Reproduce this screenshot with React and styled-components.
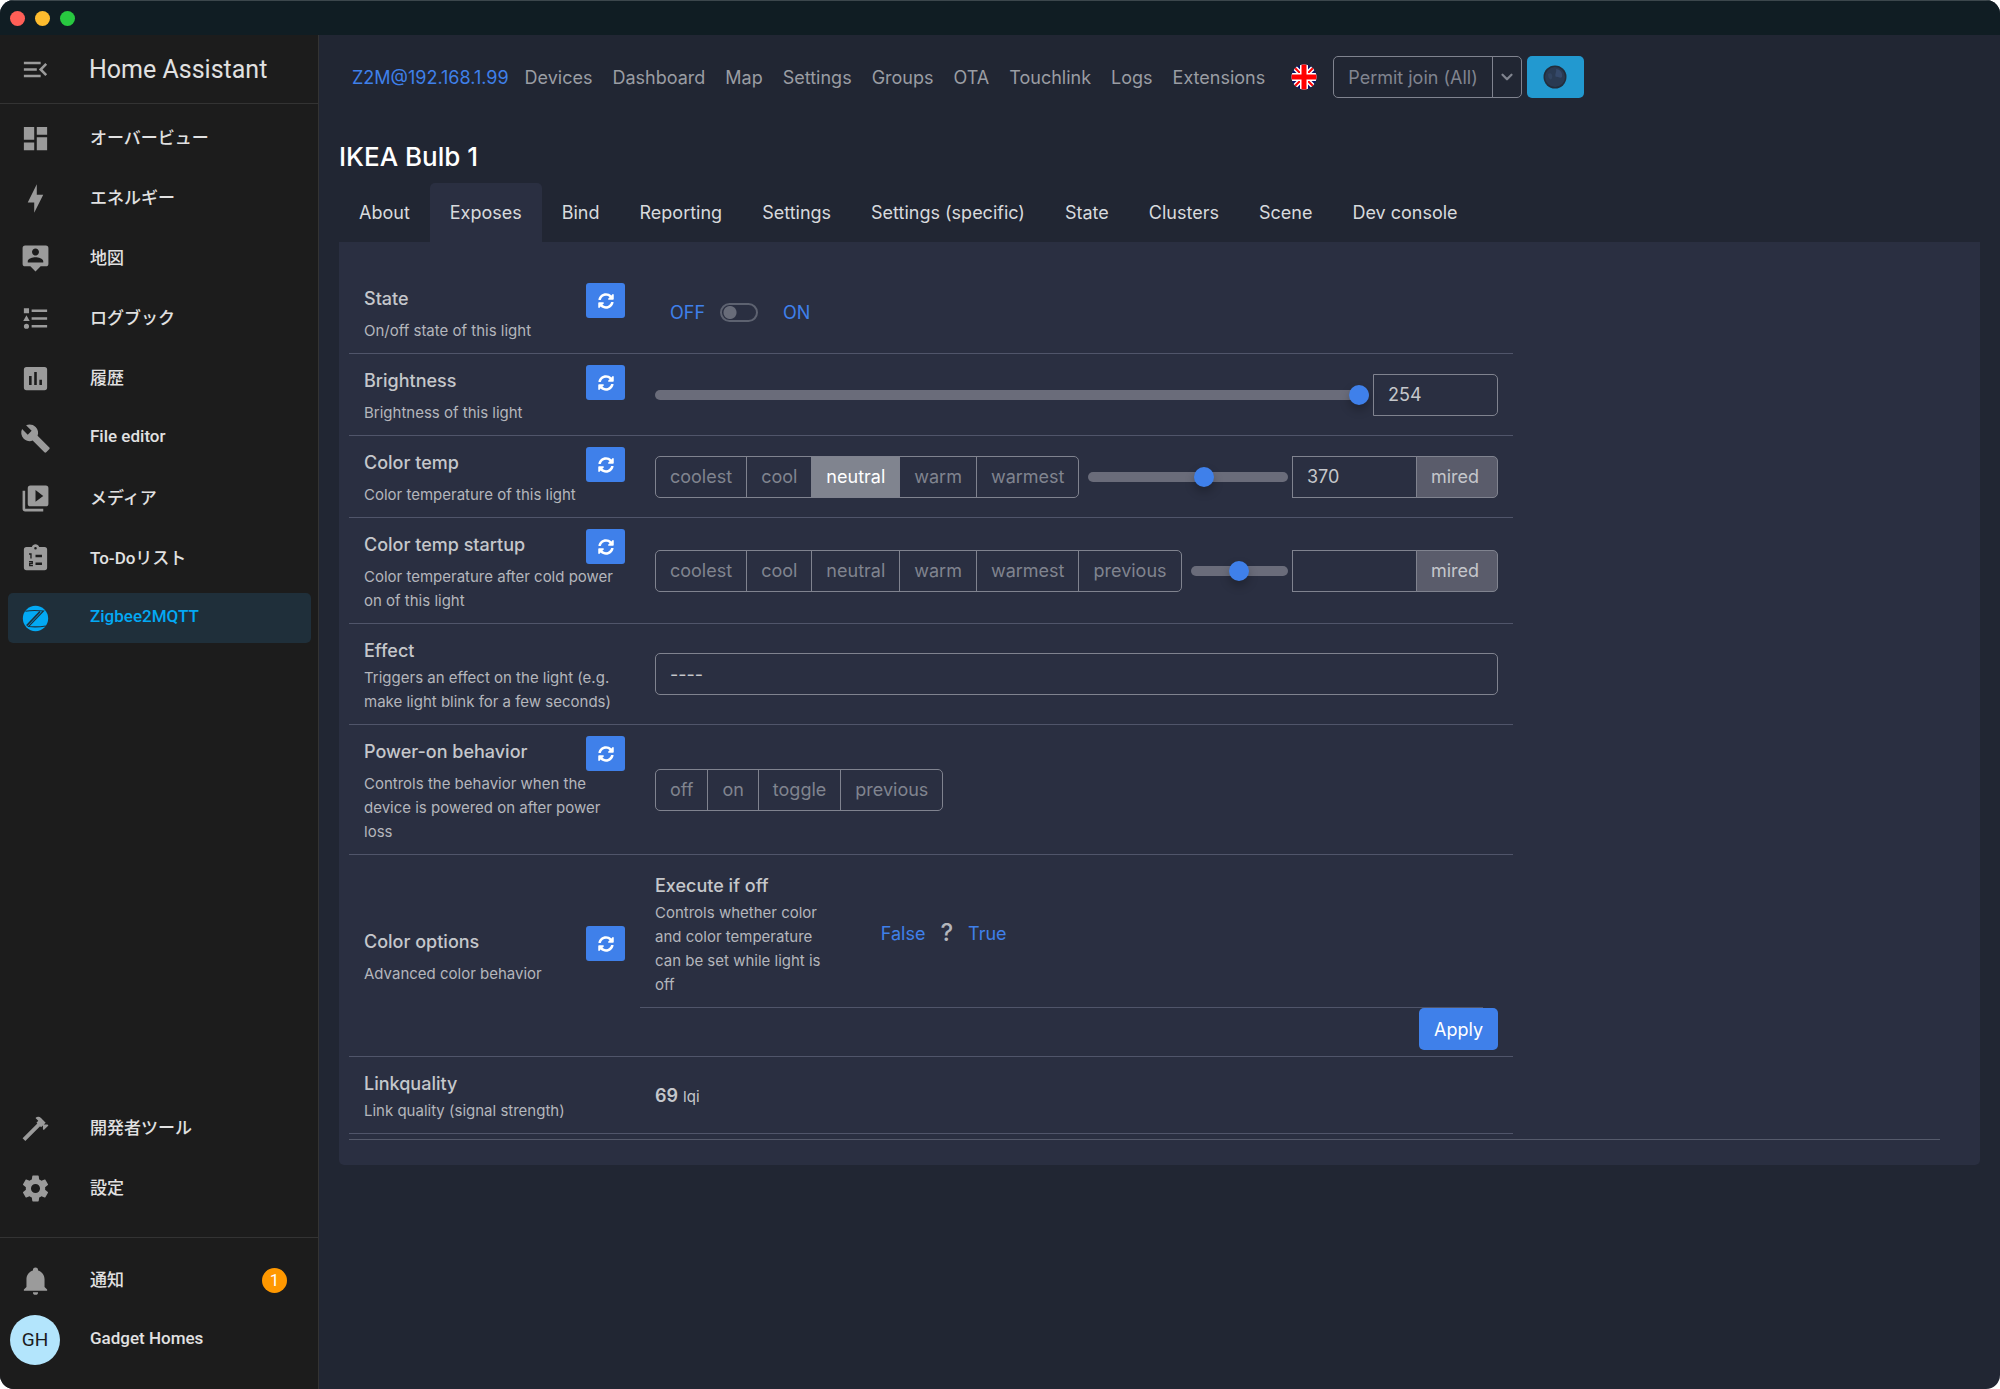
import React, { useState } from 'react'
import styled, { createGlobalStyle, css } from 'styled-components';
import { FaSyncAlt } from 'react-icons/fa';
import { FiChevronDown } from 'react-icons/fi';

const GlobalStyle = createGlobalStyle`
    * {
        box-sizing: border-box;
    }
    body {
        margin: 0;
        background: #fff;
        font-family: Inter, 'Noto Sans CJK JP', sans-serif;
        font-size: 18px;
        color: #c5c7cb;
    }
    button, input, select {
        font: inherit;
        color: inherit;
        margin: 0;
    }
    a {
        text-decoration: none;
    }
`;

const icons = {
    menu: 'M21,15.61L19.59,17L14.58,12L19.59,7L21,8.39L17.44,12L21,15.61M3,6H16V8H3V6M3,13V11H13V13H3M3,18V16H16V18H3Z',
    dashboard: 'M13,3V9H21V3M13,21H21V11H13M3,21H11V15H3M3,13H11V3H3V13Z',
    bolt: 'M11 15H6L13 1V9H18L11 23V15Z',
    map: 'M20,2H4A2,2 0 0,0 2,4V16A2,2 0 0,0 4,18H8L12,22L16,18H20A2,2 0 0,0 22,16V4A2,2 0 0,0 20,2M12,4.3C13.5,4.3 14.7,5.5 14.7,7C14.7,8.5 13.5,9.7 12,9.7C10.5,9.7 9.3,8.5 9.3,7C9.3,5.5 10.5,4.3 12,4.3M18,15H6V14.1C6,12.1 10,11 12,11C14,11 18,12.1 18,14.1V15Z',
    logbook: 'M5,9.5L7.5,14H2.5L5,9.5M3,4H7V8H3V4M5,20A2,2 0 0,0 7,18A2,2 0 0,0 5,16A2,2 0 0,0 3,18A2,2 0 0,0 5,20M9,5V7H21V5H9M9,19H21V17H9V19M9,13H21V11H9V13Z',
    history: 'M19 3H5A2 2 0 0 0 3 5V19A2 2 0 0 0 5 21H19A2 2 0 0 0 21 19V5A2 2 0 0 0 19 3M9 17H7V10H9V17M13 17H11V7H13V17M17 17H15V13H17V17Z',
    wrench: 'M22.7,19L13.6,9.9C14.5,7.6 14,4.9 12.1,3C10.1,1 7.1,0.6 4.7,1.7L9,6L6,9L1.6,4.7C0.4,7.1 0.9,10.1 2.9,12.1C4.8,14 7.5,14.5 9.8,13.6L18.9,22.7C19.3,23.1 19.9,23.1 20.3,22.7L22.6,20.4C23.1,20 23.1,19.3 22.7,19Z',
    media: 'M4,6H2V20A2,2 0 0,0 4,22H18V20H4V6M20,2H8A2,2 0 0,0 6,4V16A2,2 0 0,0 8,18H20A2,2 0 0,0 22,16V4A2,2 0 0,0 20,2M12,14.5V5.5L18,10L12,14.5Z',
    clipboard: 'M19,3H14.82C14.4,1.84 13.3,1 12,1C10.7,1 9.6,1.84 9.18,3H5A2,2 0 0,0 3,5V19A2,2 0 0,0 5,21H19A2,2 0 0,0 21,19V5A2,2 0 0,0 19,3M12,3A1,1 0 0,1 13,4A1,1 0 0,1 12,5A1,1 0 0,1 11,4A1,1 0 0,1 12,3Z',
    hammer: 'M2,19.63L13.43,8.2L12.72,7.5L14.14,6.07L12,3.89C13.2,2.7 15.09,2.7 16.27,3.89L19.87,7.5L18.45,8.91H21.29L22,9.62L18.45,13.21L17.74,12.5V9.62L16.27,11.04L15.56,10.33L4.13,21.76L2,19.63Z',
    cog: 'M12,15.5A3.5,3.5 0 0,1 8.5,12A3.5,3.5 0 0,1 12,8.5A3.5,3.5 0 0,1 15.5,12A3.5,3.5 0 0,1 12,15.5M19.43,12.97C19.47,12.65 19.5,12.33 19.5,12C19.5,11.67 19.47,11.34 19.43,11L21.54,9.37C21.73,9.22 21.78,8.95 21.66,8.73L19.66,5.27C19.54,5.05 19.27,4.96 19.05,5.05L16.56,6.05C16.04,5.66 15.5,5.32 14.87,5.07L14.5,2.42C14.46,2.18 14.25,2 14,2H10C9.75,2 9.54,2.18 9.5,2.42L9.13,5.07C8.5,5.32 7.96,5.66 7.44,6.05L4.95,5.05C4.73,4.96 4.46,5.05 4.34,5.27L2.34,8.73C2.21,8.95 2.27,9.22 2.46,9.37L4.57,11C4.53,11.34 4.5,11.67 4.5,12C4.5,12.33 4.53,12.65 4.57,12.97L2.46,14.63C2.27,14.78 2.21,15.05 2.34,15.27L4.34,18.73C4.46,18.95 4.73,19.03 4.95,18.95L7.44,17.94C7.96,18.34 8.5,18.68 9.13,18.93L9.5,21.58C9.54,21.82 9.75,22 10,22H14C14.25,22 14.46,21.82 14.5,21.58L14.87,18.93C15.5,18.67 16.04,18.34 16.56,17.94L19.05,18.95C19.27,19.03 19.54,18.95 19.66,18.73L21.66,15.27C21.78,15.05 21.73,14.78 21.54,14.63L19.43,12.97Z',
    bell: 'M21,19V20H3V19L5,17V11C5,7.9 7.03,5.17 10,4.29C10,4.19 10,4.1 10,4A2,2 0 0,1 12,2A2,2 0 0,1 14,4C14,4.1 14,4.19 14,4.29C16.97,5.17 19,7.9 19,11V17L21,19M14,21A2,2 0 0,1 12,23A2,2 0 0,1 10,21',
};

const Window = styled.div`
    min-height: 100vh;
    display: flex;
    flex-direction: column;
    border-radius: 14px;
    overflow: hidden;
    background: #212633;
`;
const TitleBar = styled.header`
    height: 35px;
    display: flex;
    align-items: center;
    gap: 10px;
    padding: 0 10px;
    background: #101d23;
    border-top: 1px solid #3c474c;
`;
const Light = styled.span`
    width: 15px;
    height: 15px;
    border-radius: 50%;
    background: ${(p) => p.$color};
`;
const Body = styled.div`
    flex: 1;
    display: flex;
`;

// sidebar
const Sidebar = styled.aside`
    width: 319px;
    flex-shrink: 0;
    display: flex;
    flex-direction: column;
    background: #1c1c1c;
    border-right: 1px solid #333;
    font-family: Roboto, 'Noto Sans CJK JP', sans-serif;
    color: #e1e1e1;
`;
const SideHead = styled.div`
    height: 69px;
    display: flex;
    align-items: center;
    gap: 38px;
    padding: 0 20px;
    border-bottom: 1px solid #333;
    font-size: 25px;
`;
const PlainButton = styled.button`
    display: flex;
    padding: 0;
    border: 0;
    background: none;
`;
const SideIcon = styled.svg`
    width: 31px;
    height: 31px;
    flex-shrink: 0;
    fill: #9b9b9b;
`;
const SideList = styled.nav`
    display: flex;
    flex-direction: column;
    gap: 10px;
    padding: 9px 7px 24px 8px;
    ${(p) => p.$grow && css`flex: 1;`}
    ${(p) => p.$line && css`
        border-top: 1px solid #333;
        padding-top: 17px;
    `}
`;
const SideItem = styled.a`
    height: 50px;
    display: flex;
    align-items: center;
    gap: 39px;
    padding: 0 12px;
    border-radius: 5px;
    font-size: 17px;
    font-weight: 500;
    color: ${(p) => (p.$active ? '#03a9f4' : '#e1e1e1')};
    background: ${(p) => (p.$active ? '#1f2f3a' : 'transparent')};

    span {
        flex: 1;
        padding-bottom: 4px;
    }
`;
const Spacer = styled.div`
    flex: 1;
`;
const Badge = styled.b`
    width: 25px;
    height: 25px;
    margin-right: 12px;
    border-radius: 50%;
    background: #ff9800;
    color: #fff;
    font-weight: 400;
    line-height: 24px;
    text-align: center;
`;
const Avatar = styled.i`
    width: 50px;
    height: 50px;
    margin: 0 -9px 0 -10px;
    border-radius: 50%;
    background: #b3e5fc;
    color: #1c1c1c;
    font-size: 19px;
    font-style: normal;
    font-weight: 400;
    line-height: 50px;
    text-align: center;
`;

// main column
const Main = styled.main`
    flex: 1;
    min-width: 0;
    padding: 0 20px;
`;
const NavBar = styled.nav`
    display: flex;
    align-items: center;
    padding: 21px 13px;
`;
const NavLink = styled.a`
    padding: 0 10px;
    color: #9a9da3;

    &:first-child {
        padding: 0 6px 0 0;
        color: #3f80ea;
    }
`;
const FlagButton = styled(PlainButton)`
    margin: 0 16px;
`;
const Group = styled.div`
    display: flex;
    flex-shrink: 0;
`;
const OutlineButton = styled.button`
    height: 42px;
    padding: 0 14px;
    border: 1px solid #80838f;
    background: ${(p) => (p.$active ? '#80848f' : 'transparent')};
    color: ${(p) => (p.$active ? '#fff' : '#80848f')};
    white-space: nowrap;

    & + & {
        margin-left: -1px;
    }
    &:first-child {
        border-radius: 5px 0 0 5px;
    }
    &:last-child {
        border-radius: 0 5px 5px 0;
    }
`;
const ArrowButton = styled(OutlineButton)`
    display: flex;
    align-items: center;
    margin-left: -1px;
    padding: 0 5px;
`;
const ThemeButton = styled.button`
    width: 57px;
    height: 42px;
    margin-left: 5px;
    display: flex;
    align-items: center;
    justify-content: center;
    border: 0;
    border-radius: 5px;
    background: #2299d0;
`;
const Title = styled.h1`
    margin: 19px 0 7px;
    font-size: 26px;
    font-weight: 500;
    line-height: 38px;
    color: #fff;
`;
const Tabs = styled.div`
    display: flex;
`;
const Tab = styled.button`
    height: 59px;
    padding: 0 20px;
    border: 0;
    border-radius: 5px 5px 0 0;
    background: ${(p) => (p.$active ? '#2a2f41' : 'transparent')};
    color: #d8dadd;
`;
const Card = styled.section`
    padding: 30px 40px 25px 10px;
    border-radius: 0 0 5px 5px;
    background: #2a2f41;
`;
const Features = styled.div`
    max-width: 1164px;
    margin-bottom: 5px;
`;
const CardEnd = styled.div`
    border-top: 1px solid #555a6b;
`;

// one exposed feature
const Row = styled.div`
    display: grid;
    grid-template-columns: 1fr 3fr;
    align-items: center;
    padding: ${(p) => (p.$nested ? '0' : '4px 0')};
    ${(p) => p.$nested && css`margin-right: 30px;`}
    border-bottom: 1px solid #50556a;
`;
const LabelCell = styled.div`
    padding: ${(p) => (p.$nested ? '11px 15px 10px' : '7px 15px 6px')};
`;
const LabelHead = styled.div`
    display: flex;
    justify-content: space-between;
    height: ${(p) => (p.$tall ? 36 : 31)}px;
`;
const Name = styled.strong`
    font-weight: 500;
    line-height: 31px;
`;
const Hint = styled.small`
    display: block;
    font-size: 15px;
    line-height: 24px;
    color: #b4b6bc;
`;
const SyncButton = styled.button`
    width: 39px;
    height: 35px;
    flex-shrink: 0;
    display: flex;
    align-items: center;
    justify-content: center;
    border: 0;
    border-radius: 3px;
    background: #3f80ea;
    color: #fff;
`;
const Control = styled.div`
    display: flex;
    align-items: center;
    min-width: 0;
    padding: ${(p) => (p.$flush ? '0' : '0 15px')};
    ${(p) => p.$flush && css`
        flex-direction: column;
        align-items: stretch;
    `}
`;
const LinkButton = styled.button`
    height: 42px;
    padding: 0 15px;
    border: 0;
    background: none;
    color: #3f80ea;
`;
const Switch = styled.input`
    appearance: none;
    width: 38px;
    height: 19px;
    margin-right: 10px;
    border: 2px solid #5d6270;
    border-radius: 10px;
    background: radial-gradient(circle at 8px 50%, #686c79 6px, transparent 7px);
`;
const Range = styled.input`
    appearance: none;
    flex: 1;
    min-width: 0;
    height: 20px;
    margin: 0 4px 0 ${(p) => (p.$after ? '9px' : '0')};
    background: transparent;

    &::-webkit-slider-runnable-track {
        height: 10px;
        border-radius: 5px;
        background: #6a6c7a;
    }
    &::-webkit-slider-thumb {
        appearance: none;
        width: 20px;
        height: 20px;
        margin-top: -5px;
        border-radius: 50%;
        background: #3f80ea;
        box-shadow: 0 5px 10px rgba(0, 0, 0, 0.25);
    }
`;
const NumberBox = styled.input`
    width: 125px;
    height: 42px;
    flex-shrink: 0;
    padding: 0 14px;
    border: 1px solid #80838f;
    border-radius: ${(p) => (p.$last ? '0 5px 5px 0' : '0')};
    background: transparent;
    outline: 0;
`;
const Unit = styled.span`
    height: 42px;
    flex-shrink: 0;
    margin-left: -1px;
    padding: 0 18px 0 14px;
    border: 1px solid #80838f;
    border-radius: 0 5px 5px 0;
    background: #5a5c6b;
    line-height: 40px;
`;
const EffectSelect = styled.select`
    appearance: none;
    width: 100%;
    height: 42px;
    padding: 0 14px;
    border: 1px solid #80838f;
    border-radius: 5px;
    background: transparent;
`;
const Unknown = styled.strong`
    font-size: 24px;
    font-weight: 500;
    line-height: 30px;
    color: #b4b6bc;
`;
const Reading = styled.span`
    strong {
        font-weight: 600;
    }
    small {
        font-size: 15px;
    }
`;
const ApplyLine = styled.div`
    display: flex;
    justify-content: flex-end;
    padding: 0 15px 2px 0;
`;
const ApplyButton = styled.button`
    height: 42px;
    padding: 0 15px;
    border: 0;
    border-radius: 5px;
    background: #3f80ea;
    color: #fff;
`;

function Icon({ name }) {
    if (name === 'zigbee') {
        return (
            <SideIcon viewBox="0 0 24 24" aria-hidden="true">
                <circle cx="12" cy="12" r="9.8" fill="#03a9f4" />
                <path d="M4.2 6.4C8 5.7 13 5.700 18.200 6.200L6.600 18.200C10.500 18.600 15.500 18.500 20 17.800" fill="none" stroke="#1f2f3a" strokeWidth="0.9" />
                <path d="M15.500 6.700L5.200 17.500" fill="none" stroke="#1f2f3a" strokeWidth="1.2" />
            </SideIcon>
        )
    }
    return (
        <SideIcon viewBox="0 0 24 24" aria-hidden="true">
            <path d={icons[name]} fillRule="evenodd" />
            {name === 'clipboard' && (
                <g fill="none" stroke="#1c1c1c">
                    <path d="M12 10H17M12 16H17" strokeWidth="2" />
                    <path d="M7 8.500H8.500V12M7 14.500H9.500V16H7.500V17.500H10" strokeWidth="1" />
                </g>
            )}
        </SideIcon>
    )
}

function Flag() {
    return (
        <svg width="26" height="26" viewBox="0 0 26 26" aria-hidden="true">
            <clipPath id="round"><circle cx="13" cy="13" r="12.500" /></clipPath>
            <g clipPath="url(#round)">
                <rect width="26" height="26" fill="#0a1468" />
                <path d="M0 0L26 26M26 0L0 26" stroke="#fff" strokeWidth="5" />
                <path d="M0 0L26 26M26 0L0 26" stroke="#f00" strokeWidth="2" />
                <path d="M13 0V26M0 13H26" stroke="#fff" strokeWidth="8" />
                <path d="M13 0V26M0 13H26" stroke="#f00" strokeWidth="5" />
            </g>
        </svg>
    )
}

function Moon() {
    return (
        <svg width="24" height="24" viewBox="0 0 24 24" aria-hidden="true">
            <circle cx="12" cy="12" r="11.500" fill="#222d3b" />
            <circle cx="12" cy="12" r="10" fill="#2a3a52" />
            <path d="M13 4C17 4 20 8 19 12C17 14 15 11 13 12C11 10 14 7 13 4Z" fill="#35496a" />
            <path d="M5 9C8 7 10 10 9 13C8 16 5 14 5 9Z" fill="#31435f" />
        </svg>
    )
}

function Feature({ name, hint, sync, nested, flush, children }) {
    return (
        <Row $nested={nested}>
            <LabelCell $nested={nested}>
                <LabelHead $tall={sync}>
                    <Name>{name}</Name>
                    {sync && <SyncButton aria-label={`Refresh ${name}`}><FaSyncAlt size={16} /></SyncButton>}
                </LabelHead>
                <Hint>{hint}</Hint>
            </LabelCell>
            <Control $flush={flush}>{children}</Control>
        </Row>
    )
}

function Choices({ items, active }) {
    return (
        <Group>
            {items.map((item) => (
                <OutlineButton key={item} $active={item === active}>{item}</OutlineButton>
            ))}
        </Group>
    )
}

const sideItems = [
    ['dashboard', 'オーバービュー'],
    ['bolt', 'エネルギー'],
    ['map', '地図'],
    ['logbook', 'ログブック'],
    ['history', '履歴'],
    ['wrench', 'File editor'],
    ['media', 'メディア'],
    ['clipboard', 'To-Doリスト'],
    ['zigbee', 'Zigbee2MQTT'],
];
const navItems = ['Z2M@192.168.1.99', 'Devices', 'Dashboard', 'Map', 'Settings', 'Groups', 'OTA', 'Touchlink', 'Logs', 'Extensions'];
const tabItems = ['About', 'Exposes', 'Bind', 'Reporting', 'Settings', 'Settings (specific)', 'State', 'Clusters', 'Scene', 'Dev console'];
const temps = ['coolest', 'cool', 'neutral', 'warm', 'warmest'];

function App() {
    const [tab, setTab] = useState('Exposes')

    return (
        <Window>
            <GlobalStyle />
            <TitleBar>
                <Light $color="#ff5f57" />
                <Light $color="#febc2e" />
                <Light $color="#28c840" />
            </TitleBar>
            <Body>
                <Sidebar>
                    <SideHead>
                        <PlainButton aria-label="Toggle sidebar"><Icon name="menu" /></PlainButton>
                        Home Assistant
                    </SideHead>
                    <SideList $grow>
                        {sideItems.map(([icon, text]) => (
                            <SideItem key={icon} href="#" $active={icon === 'zigbee'}>
                                <Icon name={icon} />
                                <span>{text}</span>
                            </SideItem>
                        ))}
                        <Spacer />
                        <SideItem href="#"><Icon name="hammer" /><span>開発者ツール</span></SideItem>
                        <SideItem href="#"><Icon name="cog" /><span>設定</span></SideItem>
                    </SideList>
                    <SideList $line>
                        <SideItem href="#"><Icon name="bell" /><span>通知</span><Badge>1</Badge></SideItem>
                        <SideItem href="#"><Avatar>GH</Avatar><span>Gadget Homes</span></SideItem>
                    </SideList>
                </Sidebar>
                <Main>
                    <NavBar>
                        {navItems.map((item) => <NavLink key={item} href="#">{item}</NavLink>)}
                        <FlagButton aria-label="Language"><Flag /></FlagButton>
                        <Group>
                            <OutlineButton>Permit join (All)</OutlineButton>
                            <ArrowButton aria-label="Select device"><FiChevronDown size={18} strokeWidth={3} /></ArrowButton>
                        </Group>
                        <ThemeButton aria-label="Theme"><Moon /></ThemeButton>
                    </NavBar>
                    <Title>IKEA Bulb 1</Title>
                    <Tabs>
                        {tabItems.map((item) => (
                            <Tab key={item} $active={item === tab} onClick={() => setTab(item)}>{item}</Tab>
                        ))}
                    </Tabs>
                    <Card>
                        <Features>
                            <Feature name="State" hint="On/off state of this light" sync>
                                <LinkButton>OFF</LinkButton>
                                <Switch type="checkbox" aria-label="State" />
                                <LinkButton>ON</LinkButton>
                            </Feature>
                            <Feature name="Brightness" hint="Brightness of this light" sync>
                                <Range type="range" min="0" max="254" defaultValue="254" aria-label="Brightness" />
                                <NumberBox $last defaultValue="254" aria-label="Brightness value" />
                            </Feature>
                            <Feature name="Color temp" hint="Color temperature of this light" sync>
                                <Choices items={temps} active="neutral" />
                                <Range $after type="range" min="250" max="454" defaultValue="370" aria-label="Color temp" />
                                <NumberBox defaultValue="370" aria-label="Color temp value" />
                                <Unit>mired</Unit>
                            </Feature>
                            <Feature name="Color temp startup" hint="Color temperature after cold power on of this light" sync>
                                <Choices items={[...temps, 'previous']} />
                                <Range $after type="range" aria-label="Color temp startup" />
                                <NumberBox aria-label="Color temp startup value" />
                                <Unit>mired</Unit>
                            </Feature>
                            <Feature name="Effect" hint="Triggers an effect on the light (e.g. make light blink for a few seconds)">
                                <EffectSelect aria-label="Effect"><option>----</option></EffectSelect>
                            </Feature>
                            <Feature name="Power-on behavior" hint="Controls the behavior when the device is powered on after power loss" sync>
                                <Choices items={['off', 'on', 'toggle', 'previous']} />
                            </Feature>
                            <Feature name="Color options" hint="Advanced color behavior" sync flush>
                                <Feature name="Execute if off" hint="Controls whether color and color temperature can be set while light is off" nested>
                                    <LinkButton>False</LinkButton>
                                    <Unknown>?</Unknown>
                                    <LinkButton>True</LinkButton>
                                </Feature>
                                <ApplyLine><ApplyButton>Apply</ApplyButton></ApplyLine>
                            </Feature>
                            <Feature name="Linkquality" hint="Link quality (signal strength)">
                                <Reading><strong>69</strong> <small>lqi</small></Reading>
                            </Feature>
                        </Features>
                        <CardEnd />
                    </Card>
                </Main>
            </Body>
        </Window>
    )
}

export default App
